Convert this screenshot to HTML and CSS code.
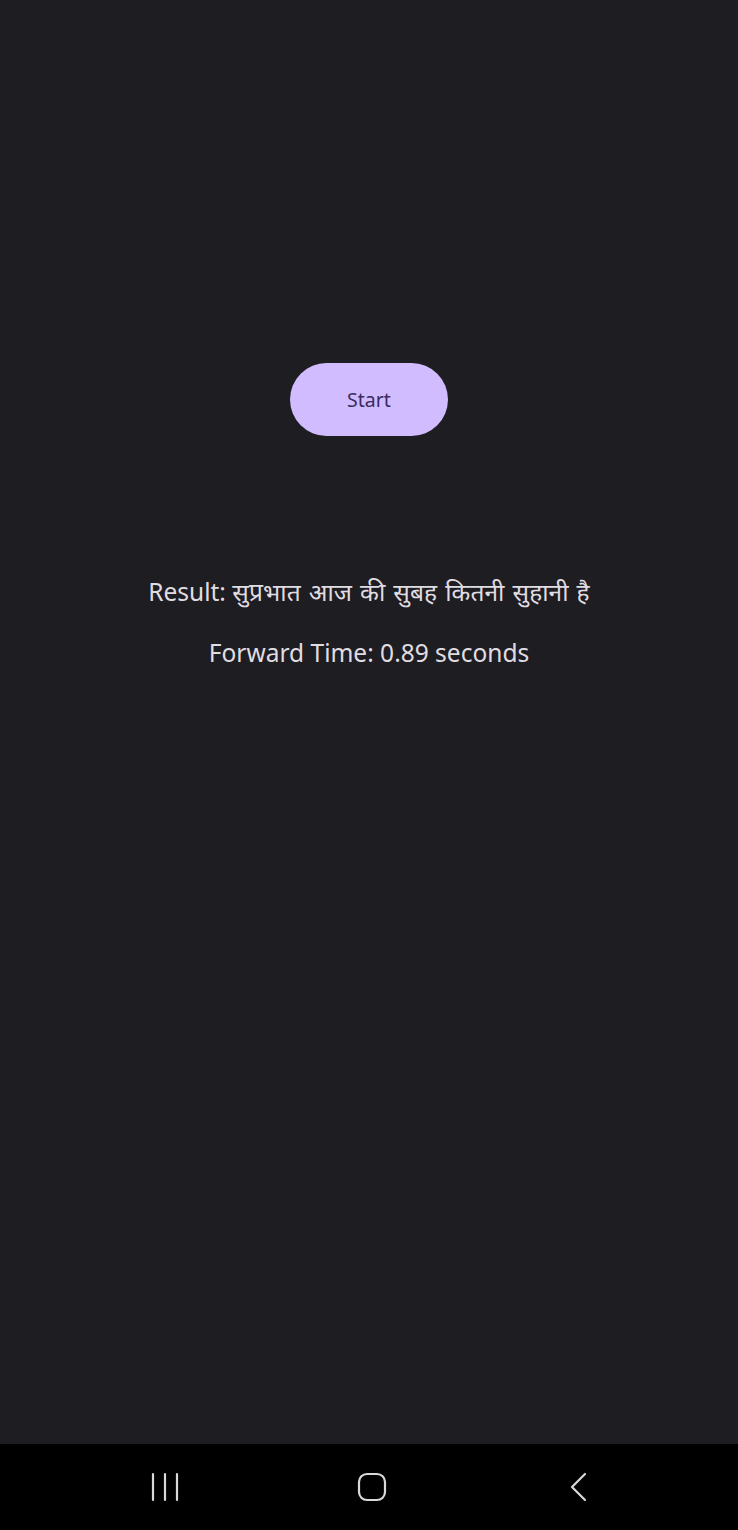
FILE: index.html
```html
<!DOCTYPE html>
<html lang="en">
<head>
<meta charset="utf-8">
<link rel="stylesheet" href="styles.css">
<title>Demo</title>
</head>
<body>
<div class="screen">
  <main class="content">
    <button class="start-btn">Start</button>
    <p class="result">Result: <span class="hindi">सुप्रभात आज की सुबह कितनी सुहानी है</span></p>
    <p class="time">Forward Time: 0.89 seconds</p>
  </main>
  <nav class="navbar">
    <svg class="nav-icon" width="30" height="30" viewBox="0 0 30 30"><g stroke="#d8d8d8" stroke-width="2.2" stroke-linecap="round"><line x1="3" y1="2" x2="3" y2="28"/><line x1="15" y1="2" x2="15" y2="28"/><line x1="27" y1="2" x2="27" y2="28"/></g></svg>
    <svg class="nav-icon" width="30" height="30" viewBox="0 0 30 30"><rect x="2" y="2" width="26" height="26" rx="8" fill="none" stroke="#d8d8d8" stroke-width="2.2"/></svg>
    <svg class="nav-icon" width="30" height="30" viewBox="0 0 30 30"><polyline points="22,2 9,15 22,28" fill="none" stroke="#d8d8d8" stroke-width="2.2" stroke-linecap="round" stroke-linejoin="round"/></svg>
  </nav>
</div>
</body>
</html>
```
FILE: styles.css
```css
html, body {
  margin: 0;
  padding: 0;
  background: #1e1d22;
}
.screen {
  width: 738px;
  height: 1530px;
  display: flex;
  flex-direction: column;
  font-family: "Noto Sans", "Open Sans", sans-serif;
}
.content {
  flex: 1;
  display: flex;
  flex-direction: column;
  align-items: center;
  padding-top: 363px;
  box-sizing: border-box;
}
.start-btn {
  width: 158px;
  height: 73px;
  border: none;
  border-radius: 37px;
  background: #d0bcff;
  color: #3b2b5e;
  font-family: "Noto Sans", sans-serif;
  font-size: 19.5px;
  padding: 0;
}
.result {
  margin: 136px 0 0;
  color: #e0dde2;
  font-size: 24.5px;
  line-height: 40px;
  white-space: nowrap;
}
.hindi {
  word-spacing: 1.5px;
  letter-spacing: 0.1px;
}
.time {
  margin: 21px 0 0;
  color: #e0dde2;
  font-size: 24.5px;
  line-height: 40px;
}
.navbar {
  height: 86px;
  background: #000;
  display: flex;
  justify-content: space-between;
  align-items: center;
  padding: 0 145px 0 150px;
  box-sizing: border-box;
}
.nav-icon {
  display: block;
}
```
